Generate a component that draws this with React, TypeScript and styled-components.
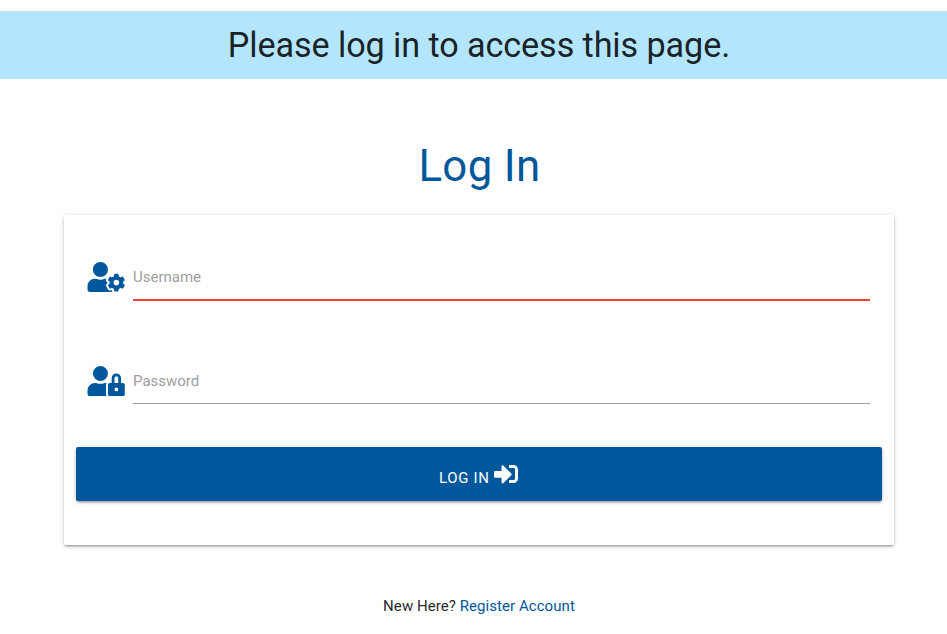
import React from 'react';
import styled, { createGlobalStyle } from 'styled-components';
import { FaUserCog, FaUserLock, FaSignInAlt } from 'react-icons/fa';

const GlobalStyle = createGlobalStyle`
  *, *::before, *::after { box-sizing: border-box; }
  html { font-size: 15px; }
  body {
    margin: 0;
    background: #fff;
    color: rgba(0, 0, 0, 0.87);
    font-family: Roboto, "Liberation Sans", sans-serif;
    line-height: 1.5;
    overflow: hidden;
  }
`;

const Page = styled.div`
  display: flex;
  flex-direction: column;
  padding-top: 11px;
`;

const Flash = styled.h4`
  margin: 0;
  height: 68px;
  padding-left: 11px;
  background: #b3e5fc;
  font-size: 34.2px;
  font-weight: 400;
  letter-spacing: -0.1px;
  line-height: 68px;
  text-align: center;
`;

const Main = styled.main`
  width: 830px;
  margin: 0 0 0 64px;
`;

const Title = styled.h3`
  margin: 63px 0 24px;
  padding-left: 1px;
  color: #01579b;
  font-size: 43.8px;
  font-weight: 400;
  letter-spacing: 0.35px;
  line-height: 49px;
  text-align: center;
`;

const Card = styled.form`
  display: flex;
  flex-direction: column;
  height: 330px;
  padding: 39px 12px 0;
  border-radius: 2px;
  background: #fff;
  box-shadow: 0 2px 2px 0 rgba(0, 0, 0, 0.14), 0 3px 1px -2px rgba(0, 0, 0, 0.12),
    0 1px 5px 0 rgba(0, 0, 0, 0.2);
`;

const Field = styled.label`
  display: flex;
  height: 104px;
  padding: 0 12px 0 11px;
`;

const FieldIcon = styled.span`
  display: flex;
  width: 46px;
  padding-top: 8px;
  color: #01579b;
  svg { width: 37.5px; height: 30px; transform: translateX(0.3px); }
`;

const Input = styled.input<{ $invalid?: boolean }>`
  flex: 1;
  height: 46px;
  padding: 0;
  border: 0;
  border-bottom: 1px solid ${p => (p.$invalid ? '#f44336' : '#9e9e9e')};
  box-shadow: ${p => (p.$invalid ? '0 1px 0 0 #f44336' : 'none')};
  border-radius: 0;
  outline: 0;
  background: transparent;
  font: 400 15px Roboto, sans-serif;
  &::placeholder { color: #9e9e9e; opacity: 1; }
`;

const Submit = styled.button`
  display: flex;
  align-items: center;
  justify-content: center;
  gap: 4.5px;
  flex: none;
  height: 54px;
  margin-top: -15px;
  padding: 0 1px 0 0;
  border: 0;
  border-radius: 2px;
  background: #01579b;
  color: #fff;
  font: 400 15px Roboto, sans-serif;
  letter-spacing: 0.65px;
  box-shadow: 0 2px 2px 0 rgba(0, 0, 0, 0.14), 0 3px 1px -2px rgba(0, 0, 0, 0.12),
    0 1px 5px 0 rgba(0, 0, 0, 0.2);
  span { padding-top: 8px; }
  svg { width: 24px; height: 24px; }
`;

const Footer = styled.p`
  margin: 50px 0 0;
  font-size: 15px;
  letter-spacing: 0.06px;
  line-height: 22px;
  text-align: center;
`;

const Link = styled.a`
  color: #01579b;
  text-decoration: none;
`;

export default function App() {
  return (
    <Page>
      <GlobalStyle />
      <Flash>Please log in to access this page.</Flash>
      <Main>
        <Title>Log In</Title>
        <Card>
          <Field>
            <FieldIcon><FaUserCog /></FieldIcon>
            <Input $invalid placeholder="Username" />
          </Field>
          <Field>
            <FieldIcon><FaUserLock /></FieldIcon>
            <Input type="password" placeholder="Password" />
          </Field>
          <Submit type="button"><span>LOG IN</span><FaSignInAlt /></Submit>
        </Card>
        <Footer>New Here? <Link href="#">Register Account</Link></Footer>
      </Main>
    </Page>
  );
}
